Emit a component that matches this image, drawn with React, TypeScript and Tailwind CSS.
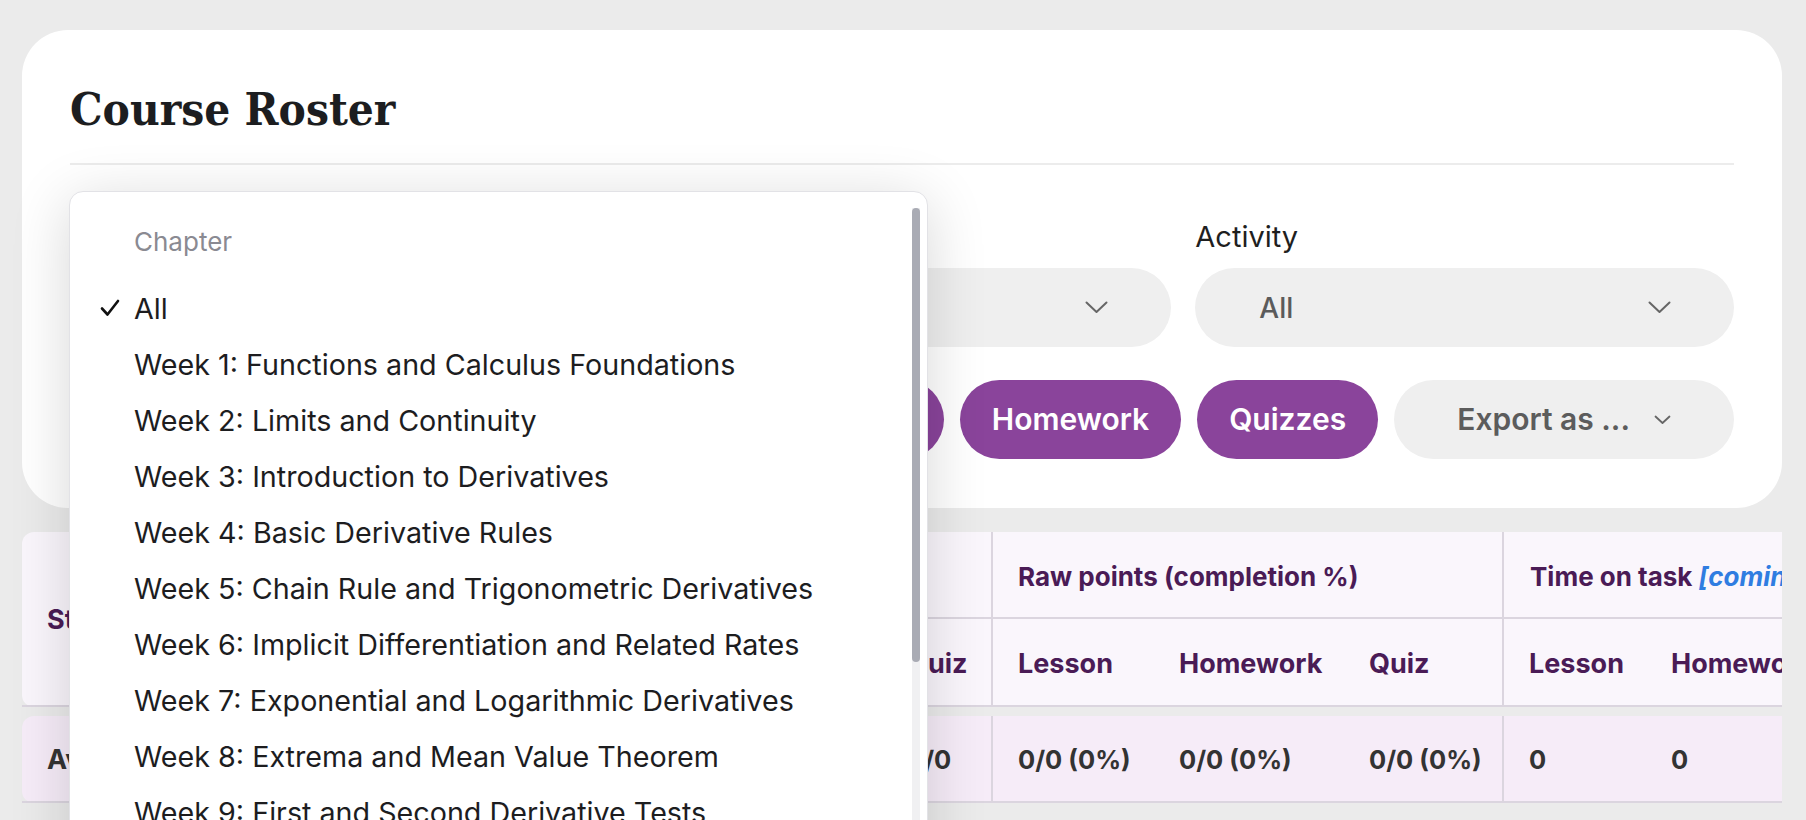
import React from 'react';

const chapters = [
    'All',
    'Week 1: Functions and Calculus Foundations',
    'Week 2: Limits and Continuity',
    'Week 3: Introduction to Derivatives',
    'Week 4: Basic Derivative Rules',
    'Week 5: Chain Rule and Trigonometric Derivatives',
    'Week 6: Implicit Differentiation and Related Rates',
    'Week 7: Exponential and Logarithmic Derivatives',
    'Week 8: Extrema and Mean Value Theorem',
    'Week 9: First and Second Derivative Tests',
    'Week 10: Optimization Problems',
    'Week 11: Introduction to Integrals',
];

function Chevron({ small = false }: { small?: boolean }) {
    // thin "v" used on the selects
    return small ? (
        <svg width="17" height="10" viewBox="0 0 17 10" fill="none">
            <path d="M1.5 1.5 L8.5 8 L15.5 1.5" stroke="#666" strokeWidth="1.8" strokeLinecap="round" strokeLinejoin="round" />
        </svg>
    ) : (
        <svg width="23" height="13" viewBox="0 0 23 13" fill="none">
            <path d="M1.5 1.5 L11.5 11 L21.5 1.5" stroke="#666" strokeWidth="2" strokeLinecap="round" strokeLinejoin="round" />
        </svg>
    );
}

function FilterSelect({ label, value }: { label: string; value: string }) {
    return (
        <div className="flex flex-col">
            <span className="text-[29px] leading-[34px] text-[#1f1f1f]">{label}</span>
            <div className="mt-[14px] flex h-[79px] items-center justify-between rounded-full bg-[#efefef] pl-[64px] pr-[63px]">
                <span className="text-[28px] font-medium text-[#5b5b5b]">{value}</span>
                <Chevron />
            </div>
        </div>
    );
}

function PillButton({ children }: { children: React.ReactNode }) {
    return (
        <button className="flex h-[79px] items-center rounded-full bg-[#8a449b] px-[32px] text-[30px] font-semibold text-white">
            {children}
        </button>
    );
}

const cols = 'grid grid-cols-[509px_162px_190px_110px_162px_190px_159px_143px_190px_160px]';
const line = 'border-[#dbd5df]';

export default function App() {
    return (
        <div className="relative h-[820px] w-[1806px] overflow-hidden bg-[#ebebeb] pl-[22px] pr-[24px] pt-[30px] font-['Inter','Noto_Sans',sans-serif]">
            {/* Header card */}
            <div className="rounded-[46px] bg-white px-[48px] pb-[49px] pt-[51px]">
                <h1 className="font-['DejaVu_Serif','Liberation_Serif',serif] text-[45.5px] font-bold leading-[56px] text-[#1c1d20] [font-stretch:condensed]">
                    Course Roster
                </h1>
                <div className="mt-[26px] border-t-2 border-[#ececec]" />

                <div className="mt-[55px] grid grid-cols-3 gap-[24px]">
                    <FilterSelect label="Chapter" value="All" />
                    <FilterSelect label="Section" value="All" />
                    <FilterSelect label="Activity" value="All" />
                </div>

                <div className="mt-[33px] flex items-center justify-end gap-[16px]">
                    <PillButton>Lessons</PillButton>
                    <PillButton>Homework</PillButton>
                    <PillButton>Quizzes</PillButton>
                    <button className="flex h-[79px] items-center gap-[24px] rounded-full bg-[#efefef] px-[63px] text-[30px] font-semibold text-[#5c5c5c]">
                        Export as ...
                        <Chevron small />
                    </button>
                </div>
            </div>

            {/* Roster table */}
            <div className="mt-[24px] w-[1760px] overflow-hidden">
                <div className={`${cols} grid-rows-[87px_88px] w-max rounded-l-[12px] bg-[#faf6fc] font-bold text-[#4a1b56]`}>
                    <div className={`row-span-2 flex items-center border-b-2 border-r-2 ${line} pl-[25px] pt-[3px] text-[27px]`}>Student</div>
                    <div className={`col-span-3 flex items-center border-b-2 border-r-2 ${line} pl-[25px] pt-[3px] text-[26px]`}>Points earned</div>
                    <div className={`col-span-3 flex items-center border-b-2 border-r-2 ${line} pl-[25px] pt-[3px] text-[26px]`}>Raw points (completion %)</div>
                    <div className={`col-span-3 flex items-center whitespace-nowrap border-b-2 ${line} pl-[26px] pt-[3px] text-[26px]`}>
                        Time on task&nbsp;<span className="italic text-[#2f7de1]">[coming soon]</span>
                    </div>
                    {[0, 1, 2].map((g) => (
                        <React.Fragment key={g}>
                            <div className={`flex items-center border-b-2 ${line} pl-[25px] pt-[5px] text-[27px]`}>Lesson</div>
                            <div className={`flex items-center border-b-2 ${line} pl-[24px] pt-[5px] text-[27px]`}>Homework</div>
                            <div className={`flex items-center border-b-2 ${g < 2 ? 'border-r-2' : ''} ${line} pl-[24px] pt-[5px] text-[27px]`}>Quiz</div>
                        </React.Fragment>
                    ))}
                </div>

                <div className={`${cols} mt-[9px] h-[87px] w-max rounded-l-[12px] bg-[#f6ecf8] text-[25.5px] font-bold text-[#333333]`}>
                    <div className={`flex items-center border-b-2 border-r-2 ${line} pl-[25px] pt-[3px] text-[27px]`}>Average</div>
                    {['0/0', '0/0', '0/0', '0/0 (0%)', '0/0 (0%)', '0/0 (0%)', '0', '0', '0'].map((v, i) => (
                        <div
                            key={i}
                            className={`flex items-center border-b-2 pt-[3px] ${i === 2 || i === 5 ? 'border-r-2' : ''} ${line} ${i % 3 === 0 ? 'pl-[25px]' : 'pl-[24px]'}`}
                        >
                            {v}
                        </div>
                    ))}
                </div>
            </div>

            {/* Open chapter listbox */}
            <div className="absolute left-[69px] top-[191px] h-[720px] w-[859px] rounded-[14px] border border-[#e2e2e6] bg-white pt-[22px] shadow-[0_10px_60px_rgba(0,0,0,0.16)]">
                <div className="pl-[64px] text-[26px] leading-[56px] text-[#8a8a92]">Chapter</div>
                <ul className="mt-[11px]">
                    {chapters.map((c, i) => (
                        <li key={c} className="relative h-[56px] whitespace-nowrap pl-[64px] text-[28.7px] leading-[56px] text-[#1d1d1f]">
                            {i === 0 && (
                                <svg className="absolute left-[30px] top-[18px]" width="20" height="18" viewBox="0 0 20 18" fill="none">
                                    <path d="M2 9.5 L7.5 15.5 L18 2" stroke="#111" strokeWidth="2.6" strokeLinecap="round" strokeLinejoin="round" />
                                </svg>
                            )}
                            {c}
                        </li>
                    ))}
                </ul>
                {/* scrollbar */}
                <div className="absolute bottom-0 right-[7px] top-[16px] w-[8px] bg-[#f0f0f2]" />
                <div className="absolute right-[7px] top-[16px] h-[454px] w-[8px] rounded-full bg-[#a9abb4]" />
            </div>
        </div>
    );
}
